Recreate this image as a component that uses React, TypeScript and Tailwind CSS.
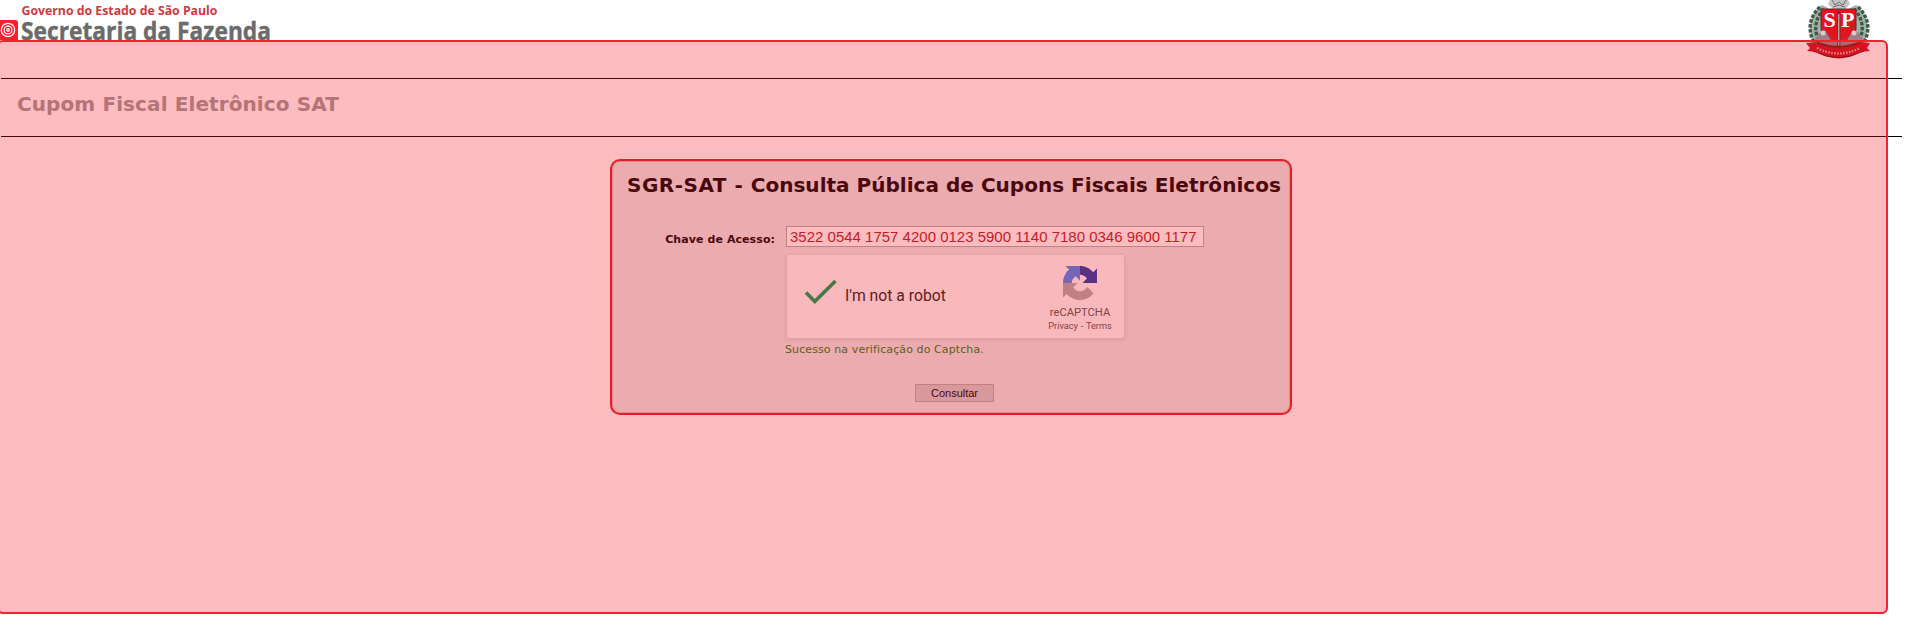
import React from "react";

function BrandLogo() {
  return (
    <svg width="300" height="40" viewBox="0 0 300 40" className="block" role="img">
      <rect x="-6" y="20" width="24" height="26" rx="3" fill="#fb1f2e" />
      <g fill="none" stroke="#fff">
        <circle cx="8" cy="30" r="6.7" strokeWidth="1.2" />
        <circle cx="8" cy="30" r="3.9" strokeWidth="1.2" />
        <circle cx="8" cy="30" r="1.3" strokeWidth="1.2" />
      </g>
      <g fontFamily="'Open Sans', sans-serif" fontWeight="700">
        <text x="21.5" y="15" fontSize="13" fill="#cf3a3d" textLength="196" lengthAdjust="spacingAndGlyphs">
          Governo do Estado de São Paulo
        </text>
        <text x="21" y="40" fontSize="25.5" fill="#6b6b6b" stroke="#6b6b6b" strokeWidth="0.4" textLength="250" lengthAdjust="spacingAndGlyphs">
          Secretaria da Fazenda
        </text>
      </g>
    </svg>
  );
}

function Emblem() {
  return (
    <svg width="68" height="62" viewBox="0 0 68 62" className="block" role="img">
      <path d="M26 0h18l2 4-5 5H29l-5-5z" fill="#c4c4c4" />
      <path d="M28 0l3 5 4-3 4 3 3-5M29 7l6-2 6 2" fill="none" stroke="#6f6f6f" />
      <path d="M18 5C5 14 2 32 12 46l12-4V8zM52 5c13 9 16 27 6 41l-12-4V8z" fill="#a3b3a8" />
      <g fill="none">
        <path d="M16 7C5 17 3 31 11 44M20 9C11 18 9 31 16 43" stroke="#3c5a48" strokeWidth="3.4" strokeDasharray="3.5 1.5" />
        <path d="M54 7c11 10 13 24 5 37M50 9c9 9 11 22 4 34" stroke="#3c5a48" strokeWidth="3.4" strokeDasharray="3.5 1.5" />
      </g>
      <path d="M17 9h35v19c0 9-9 15-17.5 18C26 43 17 37 17 28z" fill="#e3131f" stroke="#5d2a2a" />
      <path d="M10 41l5-8 6-3 4 7 10 5 10-5 4-7 6 3 5 8-8 4H17z" fill="#9b8188" />
      <path d="M24 31l6 7h10l6-7-3 11H27z" fill="#d0202b" />
      <circle cx="19" cy="33" r="2.5" fill="#d9cdd2" />
      <circle cx="50" cy="33" r="2.5" fill="#d9cdd2" />
      <path d="M34.8 11v35" stroke="#4b3a3f" strokeWidth="3" />
      <path d="M34.8 14v32" stroke="#cfc6c8" strokeWidth="1.1" />
      <g fontFamily="'Liberation Serif', serif" fontWeight="700" fontSize="22" fill="#fff">
        <text x="19.5" y="27">S</text>
        <text x="37" y="27">P</text>
      </g>
      <path d="M2 43l12-1q20 7 41 0l11 1-3 5 3 3-10 1q-21 13-43 0l-10-1 3-3z" fill="#c3121c" />
      <path d="M13 48q21 11 43 0" fill="none" stroke="#e9a9a9" strokeWidth="2.4" strokeDasharray="1.5 1.5" />
      <path d="M14 43q20 8 41 0M9 51q25 13 51 0" fill="none" stroke="#6d0b12" />
    </svg>
  );
}

function RecaptchaLogo() {
  return (
    <svg width="34" height="34" viewBox="0 0 64 64" className="block">
      <path fill="#1c3aa9" d="M64 31.955l-.033-1.37V4.687l-7.16 7.16C50.948 4.674 42.033.093 32.05.093c-10.4 0-19.622 4.96-25.458 12.64l11.736 11.86a15.55 15.55 0 0 1 4.754-5.334c2.05-1.6 4.952-2.906 8.968-2.906.485 0 .86.057 1.135.163 4.976.393 9.288 3.14 11.828 7.124l-8.307 8.307L64 31.953" />
      <path fill="#4285f4" d="M31.862.094l-1.37.033H4.594l7.16 7.16C4.58 13.147 0 22.06 0 32.046c0 10.4 4.96 19.622 12.64 25.458L24.5 45.768a15.55 15.55 0 0 1-5.334-4.754c-1.6-2.05-2.906-4.952-2.906-8.968 0-.485.057-.86.163-1.135.393-4.976 3.14-9.288 7.124-11.828l8.307 8.307L31.86.095" />
      <path fill="#ababab" d="M.001 32.045l.033 1.37v25.898l7.16-7.16c5.86 7.173 14.774 11.754 24.76 11.754 10.4 0 19.622-4.96 25.458-12.64l-11.736-11.86a15.55 15.55 0 0 1-4.754 5.334c-2.05 1.6-4.952 2.906-8.968 2.906-.485 0-.86-.057-1.135-.163-4.976-.393-9.288-3.14-11.828-7.124l8.307-8.307c-10.522.04-22.4.066-27.295-.005" />
    </svg>
  );
}

function Captcha() {
  return (
    <div className="flex h-[85px] w-[339px] items-start justify-between rounded-[3px] border border-[#dcdcdc] bg-[#f9f9f9] shadow-[0_1px_3px_0_rgba(0,0,0,0.1)]">
      <div className="flex items-start pl-[17px] pt-[24px]">
        <svg width="34" height="26" viewBox="0 0 34 26" className="block">
          <path d="M2 13.5L10.8 22.5L31.5 2" fill="none" stroke="#009e55" strokeWidth="3.6" />
        </svg>
        <span className="ml-[7px] mt-[5px] font-['Roboto',sans-serif] text-[15.75px] leading-[24px] whitespace-nowrap text-[#222]">
          I'm not a robot
        </span>
      </div>
      <div className="flex w-[88px] flex-col items-center pt-[11px] font-['Roboto',sans-serif] text-[#555]">
        <RecaptchaLogo />
        <span className="mt-[5px] text-[11.2px] leading-[15px]">reCAPTCHA</span>
        <span className="text-[9.2px] leading-[12px] whitespace-nowrap [word-spacing:0.5px]">Privacy - Terms</span>
      </div>
    </div>
  );
}

export default function App() {
  return (
    <div className="relative h-[634px] w-full overflow-hidden bg-white font-['DejaVu_Sans',sans-serif]">
      <header className="flex h-[78px] items-start justify-between pr-[48px]">
        <BrandLogo />
        <Emblem />
      </header>
      <div className="ml-px mr-[18px] flex h-[59px] items-center border-y border-black pl-4">
        <h1 className="pb-[8px] text-[20px] leading-[26px] font-bold tracking-[0.1px] whitespace-nowrap text-[#999]">
          Cupom Fiscal Eletrônico SAT
        </h1>
      </div>
      <main className="ml-[610px] mt-[22px] h-[256px] w-[682px] rounded-[10px] border-2 border-[#df1f26] bg-[#e7e7e7] shadow-[inset_0_0_0_1px_#d8b8b8]">
        <h2 className="pl-[15px] pt-[11px] text-[20px] leading-[26px] font-bold tracking-[0.02px] whitespace-nowrap text-black">
          <span className="tracking-[0.5px]">SGR-SAT - </span>
          Consulta Pública de Cupons Fiscais Eletrônicos
        </h2>
        <div className="mt-[28px] flex">
          <label className="w-[163px] pt-[6px] text-right text-[11px] leading-[16px] font-bold tracking-[0.08px] whitespace-nowrap text-black">
            Chave de Acesso:
          </label>
          <div className="ml-[11px]">
            <div className="flex h-[21px] w-[418px] items-center border border-[#aaa] bg-white pt-px pl-[3px] font-['Liberation_Sans',sans-serif] text-[15px] whitespace-nowrap text-[#b01f28]">
              3522 0544 1757 4200 0123 5900 1140 7180 0346 9600 1177
            </div>
            <div className="mt-[7px]">
              <Captcha />
            </div>
            <p className="-ml-px mt-[3px] text-[11px] leading-[16px] tracking-[0.1px] whitespace-nowrap text-[#207a18]">
              Sucesso na verificação do Captcha.
            </p>
          </div>
        </div>
        <button className="ml-[303px] mt-[26px] flex h-[18px] w-[79px] items-center justify-center border border-[#aaa] bg-[#ccc] font-['Liberation_Sans',sans-serif] text-[11px] text-black">
          Consultar
        </button>
      </main>
      <div className="pointer-events-none absolute top-[40px] -left-[3px] h-[574px] w-[1891px] rounded-[6px] border-2 border-[#fb1f2e] bg-[rgba(245,28,42,0.295)]" />
    </div>
  );
}
